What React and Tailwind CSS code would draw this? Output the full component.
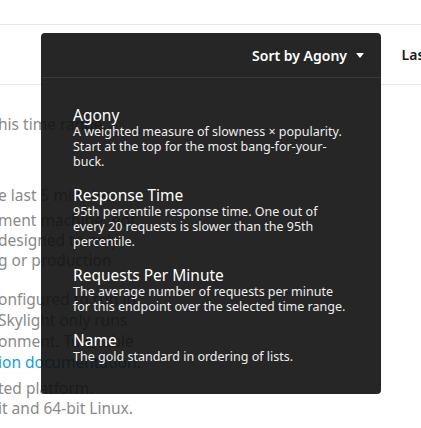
const font = { fontFamily: "'Noto Sans', 'Open Sans', sans-serif" };

const sorts = [
  {
    title: "Agony",
    text: "A weighted measure of slowness × popularity. Start at the top for the most bang-for-your-buck.",
  },
  {
    title: "Response Time",
    text: "95th percentile response time. One out of every 20 requests is slower than the 95th percentile.",
  },
  {
    title: "Requests Per Minute",
    text: "The average number of requests per minute for this endpoint over the selected time range.",
  },
  {
    title: "Name",
    text: "The gold standard in ordering of lists.",
  },
];

function Background() {
  return (
    <div className="text-[15.5px] text-[#8a8a8a]">
      <div className="h-6" />
      <div className="flex h-[61px] items-center justify-end border-y border-[#e8e8e8]">
        <span className="mr-[-9px] text-[14px] font-semibold text-[#1b1b1b]">Last</span>
      </div>
      <div className="-ml-[2px] pt-[29px] leading-[20px]">
        <p>his time range.</p>
        <p className="mt-[51px]">e last 5 minutes.</p>
        <div className="mt-[5px]">
          <p>ment machine, not</p>
          <p>designed to only</p>
          <p>g or production</p>
        </div>
        <div className="mt-[19px] leading-[21px]">
          <p>onfigured to run in</p>
          <p>Skylight only runs</p>
          <p>onment. To enable</p>
          <p className="text-[#1c9be4]">ion documentation.</p>
        </div>
        <div className="mt-[5px] leading-[20px]">
          <p>ted platform.</p>
          <p>it and 64-bit Linux.</p>
        </div>
      </div>
    </div>
  );
}

export default function App() {
  return (
    <div className="relative h-[428px] w-[421px] overflow-hidden bg-white" style={font}>
      <Background />
      <div className="absolute left-[41px] top-[33px] w-[340px] rounded-[4px] bg-[#0e0e0e]/90 text-white">
        <div className="flex h-[45px] items-center justify-end border-b border-[#3a3a3a] pr-[17px]">
          <span className="text-[14px] font-semibold">Sort by Agony</span>
          <svg width="8" height="5" viewBox="0 0 8 5" className="ml-[9px] mt-[1px]">
            <path d="M0 0h8L4 5z" fill="#ffffff" />
          </svg>
        </div>
        <div className="flex flex-col gap-[17px] px-8 pb-[30px] pt-[28px]">
          {sorts.map((s) => (
            <div key={s.title}>
              <div className="text-[15.5px] font-normal leading-[18px]">{s.title}</div>
              <p className="text-[12.5px] leading-[15px] text-[#ededed]">{s.text}</p>
            </div>
          ))}
        </div>
      </div>
    </div>
  );
}
